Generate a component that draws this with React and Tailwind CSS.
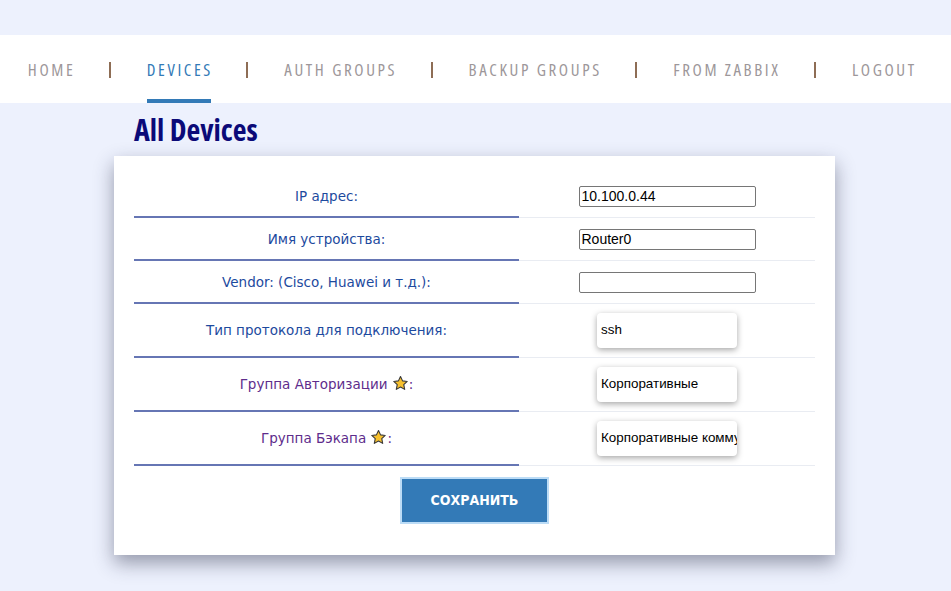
import React from "react";

function Star() {
  return (
    <svg width="17" height="17" viewBox="0 0 24 24" className="inline-block align-[-3px] ml-[0px]">
      <path
        d="M12 2.2l2.9 6.1 6.6.8-4.9 4.6 1.3 6.6L12 17l-5.9 3.3 1.3-6.6-4.9-4.6 6.6-.8z"
        fill="#f7c12e"
        stroke="#3a3a3a"
        strokeWidth="1.6"
        strokeLinejoin="round"
      />
    </svg>
  );
}

const navItems = ["HOME", "DEVICES", "AUTH GROUPS", "BACKUP GROUPS", "FROM ZABBIX", "LOGOUT"];

const narrow = {
  fontFamily: "'Liberation Sans Narrow', 'Open Sans', sans-serif",
  fontStretch: "75%",
};

function Row({ label, children, tall }) {
  return (
    <div className={`grid grid-cols-[385px_296px] ${tall ? "h-[54px]" : "h-[43px]"}`}>
      <div className="flex items-center justify-center border-b-2 border-[#6676b4] pt-[1px]">{label}</div>
      <div className="flex items-center justify-center border-b border-[#e9ecf2]">{children}</div>
    </div>
  );
}

function TextInput({ value }) {
  return (
    <input
      readOnly
      value={value}
      className="w-[177px] h-[21px] border border-[#767676] rounded-[2px] px-[2px] text-[14px] text-black outline-none bg-white"
      style={{ fontFamily: "'Liberation Sans', Arial, sans-serif" }}
    />
  );
}

function Select({ value }) {
  return (
    <div
      className="w-[140px] h-[35px] rounded-[4px] bg-white shadow-[0_2px_6px_rgba(0,0,0,0.35)] flex items-center pl-[4px] overflow-hidden whitespace-nowrap text-[13.4px] text-black"
      style={{ fontFamily: "'Liberation Sans', Arial, sans-serif" }}
    >
      {value}
    </div>
  );
}

export default function App() {
  const labelFont = { fontFamily: "'DejaVu Sans', Verdana, sans-serif" };
  return (
    <div className="min-h-[591px] bg-[#edf1fd] pt-[35px]">
      <nav className="h-[68px] bg-white flex items-center justify-center gap-[36px] pr-[9px]" style={narrow}>
        {navItems.map((item, i) => (
          <React.Fragment key={item}>
            {i > 0 && <span className="w-[2px] h-[16px] bg-[#8e6d55] mt-[2px] shrink-0" />}
            <span
              className={`relative h-[68px] flex items-center pt-[2px] whitespace-nowrap text-[17px] tracking-[2.6px] mr-[-2.6px] ${
                item === "DEVICES" ? "text-[#337ab7]" : "text-[#9d979a]"
              }`}
            >
              {item}
              {item === "DEVICES" && (
                <span className="absolute left-0 right-[2px] bottom-0 h-[4px] bg-[#337ab7]" />
              )}
            </span>
          </React.Fragment>
        ))}
      </nav>

      <div className="w-[721px] ml-[114px]">
        <h1
          className="pl-[20px] pt-[9px] h-[53px] text-[30px] font-bold text-[#0b0a78] leading-[36px]"
          style={narrow}
        >
          All Devices
        </h1>

        <div className="bg-white shadow-[0_8px_18px_rgba(40,45,70,0.45)] px-[20px] pt-[19px] pb-[31px]">
          <div className="text-[13.5px]" style={labelFont}>
            <Row label={<span className="text-[#1d4a9e]">IP адрес:</span>}>
              <TextInput value="10.100.0.44" />
            </Row>
            <Row label={<span className="text-[#1d4a9e]">Имя устройства:</span>}>
              <TextInput value="Router0" />
            </Row>
            <Row label={<span className="text-[#1d4a9e]">Vendor: (Cisco, Huawei и т.д.):</span>}>
              <TextInput value="" />
            </Row>
            <Row tall label={<span className="text-[#1d4a9e]">Тип протокола для подключения:</span>}>
              <Select value="ssh" />
            </Row>
            <Row
              tall
              label={
                <span className="text-[#5e2d8c]">
                  Группа Авторизации <Star />:
                </span>
              }
            >
              <Select value="Корпоративные" />
            </Row>
            <Row
              tall
              label={
                <span className="text-[#5e2d8c]">
                  Группа Бэкапа <Star />:
                </span>
              }
            >
              <Select value="Корпоративные коммутаторы" />
            </Row>
          </div>
          <div className="flex justify-center pt-[11px]">
            <button
              className="w-[149px] h-[47px] bg-[#337ab7] border-2 border-[#bcdcf6] text-white font-bold text-[14px]"
              style={{ fontFamily: "'DejaVu Sans', sans-serif", fontStretch: "condensed" }}
            >
              СОХРАНИТЬ
            </button>
          </div>
        </div>
      </div>
    </div>
  );
}
